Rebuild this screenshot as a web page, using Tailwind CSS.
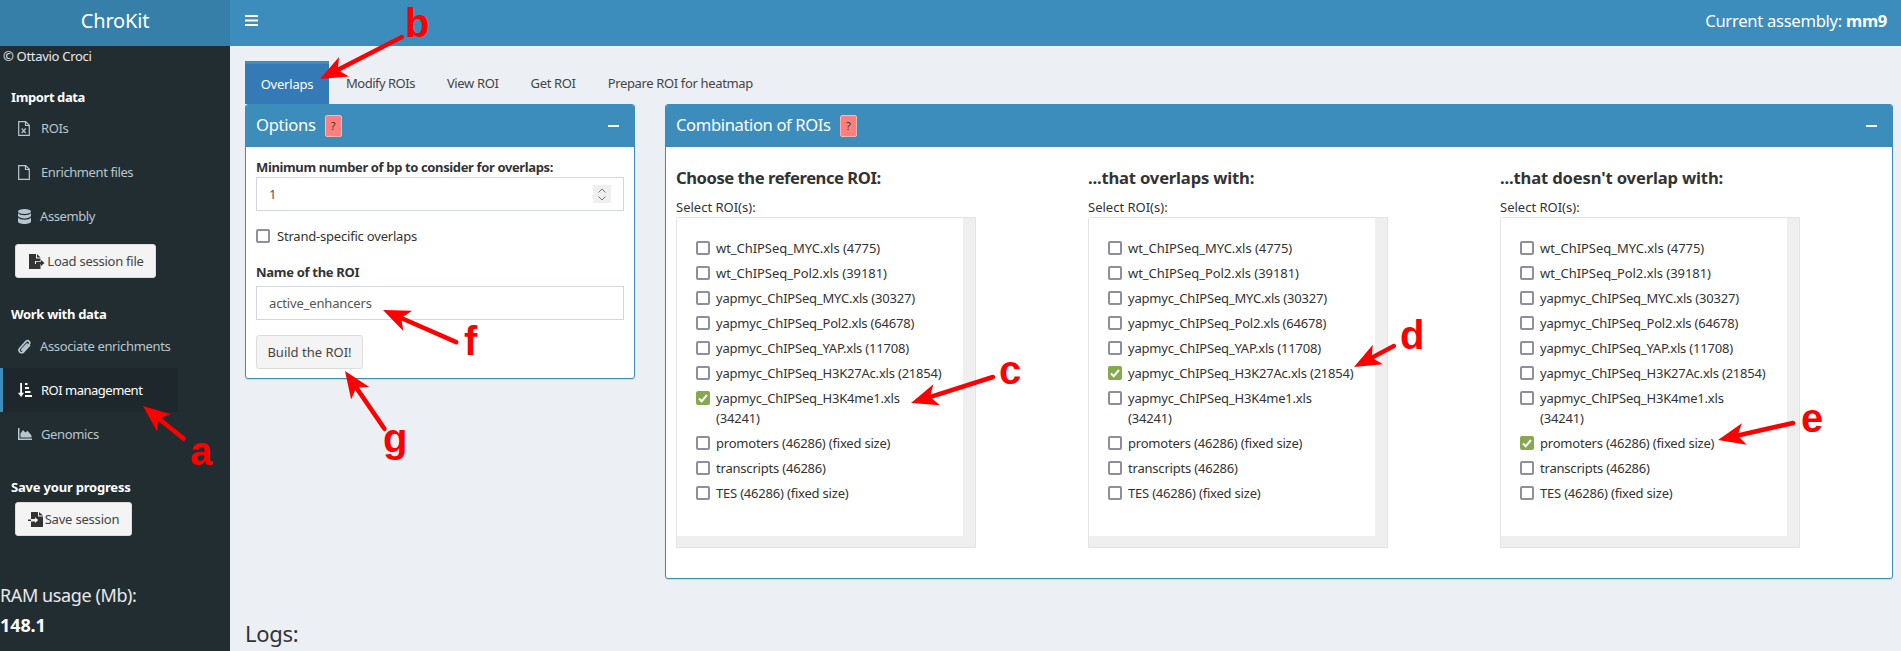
<!DOCTYPE html>
<html lang="en">
<head>
  <meta charset="UTF-8" />
  <title>ChroKit</title>
  <script src="https://cdn.jsdelivr.net/npm/@tailwindcss/browser@4"></script>
</head>
<body class="relative h-[651px] overflow-hidden bg-[#ecf0f5] font-['Noto_Sans',sans-serif] text-[13px] leading-[20px] text-[#333]">
  <!-- Top bar -->
  <header class="flex h-[46px] text-white">
    <div class="flex w-[230px] items-center justify-center bg-[#367fa9] pb-[4px] text-[20px] tracking-[-0.2px]">ChroKit</div>
    <div class="flex flex-1 items-center justify-between bg-[#3c8dbc] pr-[14px] pl-[15px]">
      <svg class="mb-[5px] h-[11px] w-[13px]" viewBox="0 0 13 11" fill="#fff"><rect width="13" height="2" y="0"/><rect width="13" height="2" y="4.5"/><rect width="13" height="2" y="9"/></svg>
      <div class="mb-[5px] text-[16.6px] tracking-[-0.28px]">Current assembly: <b>mm9</b></div>
    </div>
  </header>

  <div class="flex h-[605px]">
    <!-- Sidebar -->
    <aside class="w-[230px] shrink-0 bg-[#222d32] text-[#b8c7ce]">
      <div class="pl-[3px] tracking-[-0.3px] text-white/90">© Ottavio Croci</div>
      <h4 class="mt-[21px] pl-[11px] font-bold tracking-[-0.4px] text-white">Import data</h4>
      <nav class="-mt-px tracking-[-0.4px]">
        <a class="flex h-[44px] items-center pl-[18px]"><span class="w-[23px]">
          <svg class="h-[15px] w-[12px]" viewBox="0 0 12 15" fill="none" stroke="#b8c7ce" stroke-width="1.2"><path d="M.7.7h7l3.6 3.6v10H.7zM7.5.7v3.8h3.8"/><path d="M3.7 7.500l4 4.500M7.700 7.500l-4 4.500"/></svg>
        </span>ROIs</a>
        <a class="flex h-[44px] items-center pl-[18px]"><span class="w-[23px]">
          <svg class="h-[15px] w-[12px]" viewBox="0 0 12 15" fill="none" stroke="#b8c7ce" stroke-width="1.2"><path d="M.7.7h7l3.6 3.6v10H.7zM7.5.7v3.8h3.8"/></svg>
        </span>Enrichment files</a>
        <a class="flex h-[44px] items-center pl-[18px]"><span class="w-[22px]">
          <svg class="h-[15px] w-[13px]" viewBox="0 0 13 15" fill="#b8c7ce"><ellipse cx="6.500" cy="2.500" rx="6.500" ry="2.500"/><path d="M0 4c1 1.600 3.600 2.200 6.500 2.200S12 5.600 13 4v3c-1 1.700-3.600 2.400-6.500 2.400S1 8.700 0 7zM0 8.600c1 1.600 3.600 2.200 6.500 2.200S12 10.200 13 8.600v3.900C13 14 10 15 6.500 15S0 14 0 12.500z"/></svg>
        </span>Assembly</a>
      </nav>
      <button class="mt-[6px] ml-[15px] flex h-[34px] w-[141px] items-center justify-center rounded-[3px] border border-[#ddd] bg-[#f4f4f4] pl-[2px] tracking-[-0.25px] text-[#444]">
        <svg class="mr-[2px] h-[15px] w-[16px]" viewBox="0 0 16 15" fill="#333"><path d="M0 0h7v4.500h4.500V7H6v3h5.500v5H0zM8 0l3.500 3.500H8zM7 7.800h5V6l3.500 3-3.500 3v-1.800H7z"/></svg>Load session file</button>
      <h4 class="mt-[26px] pl-[11px] font-bold tracking-[-0.3px] text-white">Work with data</h4>
      <nav class="tracking-[-0.35px]">
        <a class="flex h-[44px] items-center pl-[18px]"><span class="w-[22px]">
          <svg class="h-[15px] w-[13px]" viewBox="0 0 13 15" fill="none" stroke="#b8c7ce" stroke-width="1.700" stroke-linecap="round"><path d="M11.500 6.500L5.600 12.800c-1.300 1.300-3.100 1.200-4-.1-.9-1.100-.7-2.500.2-3.500L8 2.400c.9-.9 2.200-1 3.100-.1.800.8.800 2.100 0 3L5.500 11.200c-.5.500-1.100.5-1.400.1-.3-.4-.3-.9.100-1.300L9 5"/></svg>
        </span>Associate enrichments</a>
        <a class="flex h-[44px] w-[178px] items-center border-l-[3px] border-[#3c8dbc] bg-[#1e282c] pl-[15px] tracking-[-0.5px] text-white"><span class="w-[23px]">
          <svg class="h-[14px] w-[14px]" viewBox="0 0 14 14" fill="#fff"><path d="M2.200 0h1.800v9.700h2L3.100 14 0 9.700h2.200zM7 0h2.500v2H7zM7 4h4v2H7zM7 8h5.500v2H7zM7 12h7v2H7z"/></svg>
        </span>ROI management</a>
        <a class="flex h-[44px] items-center pl-[18px]"><span class="w-[23px]">
          <svg class="h-[12px] w-[14px]" viewBox="0 0 14 12" fill="#b8c7ce"><path d="M0 0h1.500v10.500H14V12H0z"/><path d="M2.500 9.500V5.500L5 2l2.500 2.500L9.500 2.800 13.500 7.500v2z"/></svg>
        </span>Genomics</a>
      </nav>
      <h4 class="mt-[21px] pl-[11px] font-bold tracking-[-0.2px] text-white">Save your progress</h4>
      <button class="mt-[5px] ml-[15px] flex h-[34px] w-[117px] items-center justify-center rounded-[3px] border border-[#ddd] bg-[#f4f4f4] tracking-[-0.2px] text-[#444]">
        <svg class="mr-[2px] h-[15px] w-[15px]" viewBox="0 0 15 15" fill="#333"><path d="M3 0h7v4.500h5V15H3V9.500h4V11l3.200-3L7 5.200v1.800H3zM11 0l4 3.500h-4zM0 7.500h3v1.500H0z"/></svg>Save session</button>
      <div class="mt-[45px] text-[18px] leading-[28px] tracking-[-0.4px] text-white/90">RAM usage (Mb):</div>
      <div class="mt-[2px] text-[18px] leading-[28px] font-bold tracking-[-0.1px] text-white">148.1</div>
    </aside>

    <!-- Content -->
    <main class="flex-1 px-[15px]">
      <div class="mt-[15px] flex h-[43px] items-center tracking-[-0.35px] text-[#444]">
        <a class="mr-[2px] flex h-[43px] w-[84px] items-center justify-center border-t-[3px] border-[#3c8dbc] bg-[#337ab7] tracking-[-0.2px] text-white">Overlaps</a>
        <a class="mr-[2px] px-[15px] tracking-[-0.5px]">Modify ROIs</a>
        <a class="mr-[2px] px-[15px]">View ROI</a>
        <a class="mr-[2px] px-[15px]">Get ROI</a>
        <a class="mr-[2px] px-[15px]">Prepare ROI for heatmap</a>
      </div>

      <div class="flex items-start gap-[30px]">
        <!-- Options box -->
        <section class="w-[390px] overflow-hidden rounded-[3px] border border-[#3c8dbc] bg-white shadow-[0_1px_1px_rgba(0,0,0,0.1)]">
          <div class="flex h-[42px] items-center justify-between bg-[#3c8dbc] pr-[15px] pl-[10px] text-white">
            <div class="flex items-center text-[16.6px] tracking-[-0.3px]"><span class="mb-[2px]">Options</span><span class="ml-[9px] flex h-[22px] w-[17px] items-center justify-center rounded-[2px] border border-[#ffb3b3] bg-[#ff7f7f] text-[11px] text-[#333]">?</span></div>
            <span class="h-[2px] w-[11px] bg-white"></span>
          </div>
          <div class="px-[10px] pt-[10px] pb-[9px]">
            <label class="block font-bold tracking-[-0.37px]">Minimum number of bp to consider for overlaps:</label>
            <div class="flex h-[34px] items-center border border-[#d2d6de] pr-[12px] pl-[12px] text-[#555]">
              <input class="min-w-0 flex-1 outline-none" value="1" />
              <span class="flex h-[18px] w-[18px] flex-col items-center justify-center gap-[3px] bg-[#efefef]">
                <svg class="h-[5px] w-[8px]" viewBox="0 0 8 5" fill="none" stroke="#777" stroke-width="1"><path d="M.5 4.500l3.500-3.500 3.500 3.500"/></svg>
                <svg class="h-[5px] w-[8px]" viewBox="0 0 8 5" fill="none" stroke="#777" stroke-width="1"><path d="M.5.500l3.500 3.500 3.500-3.500"/></svg>
              </span>
            </div>
            <div class="mt-[15px] flex items-center gap-[7px] tracking-[-0.2px]"><span class="h-[14px] w-[14px] rounded-[2px] border-2 border-[#8f8e9c]"></span>Strand-specific overlaps</div>
            <label class="mt-[16px] mb-[4px] block font-bold tracking-[-0.3px]">Name of the ROI</label>
            <input class="block h-[34px] w-full border border-[#d2d6de] px-[12px] tracking-[-0.15px] text-[#555] outline-none" value="active_enhancers" />
            <button class="mt-[15px] h-[34px] w-[107px] rounded-[3px] border border-[#ddd] bg-[#f4f4f4] text-[#444]">Build the ROI!</button>
          </div>
        </section>

        <!-- Combination box -->
        <section class="h-[475px] w-[1228px] overflow-hidden rounded-[3px] border border-[#3c8dbc] bg-white shadow-[0_1px_1px_rgba(0,0,0,0.1)]">
          <div class="flex h-[42px] items-center justify-between bg-[#3c8dbc] pr-[15px] pl-[10px] text-white">
            <div class="flex items-center text-[16.6px] tracking-[-0.38px]"><span class="mb-[2px]">Combination of ROIs</span><span class="ml-[9px] flex h-[22px] w-[17px] items-center justify-center rounded-[2px] border border-[#ffb3b3] bg-[#ff7f7f] text-[11px] text-[#333]">?</span></div>
            <span class="h-[2px] w-[11px] bg-white"></span>
          </div>
          <div id="columns" class="flex pl-[10px]"></div>
        </section>
      </div>

      <div class="mt-[38px] text-[22px] leading-[32px] tracking-[-0.3px]">Logs:</div>
    </main>
  </div>

  <!-- Annotations drawn over the screenshot -->
  <svg class="pointer-events-none absolute top-0 left-0 h-[651px] w-[1901px]" viewBox="0 0 1901 651" fill="#f00">
    <g stroke="#f00" stroke-width="4.500" stroke-linecap="round">
      <g transform="translate(320 79) rotate(-27.100)"><line x1="18" y1="0" x2="92" y2="0"/></g>
      <g transform="translate(143 406) rotate(38.800)"><line x1="18" y1="0" x2="52" y2="0"/></g>
      <g transform="translate(383 310) rotate(23.700)"><line x1="18" y1="0" x2="80" y2="0"/></g>
      <g transform="translate(345 371) rotate(55.700)"><line x1="18" y1="0" x2="70" y2="0"/></g>
      <g transform="translate(911 403) rotate(-17.600)"><line x1="18" y1="0" x2="86" y2="0"/></g>
      <g transform="translate(1354 367) rotate(-27.700)"><line x1="18" y1="0" x2="45" y2="0"/></g>
      <g transform="translate(1718 440) rotate(-12.800)"><line x1="18" y1="0" x2="77" y2="0"/></g>
    </g>
    <path transform="translate(320 79) rotate(-27.100)" d="M0 0L27 -11L20 0L27 11Z"/>
    <path transform="translate(143 406) rotate(38.800)" d="M0 0L27 -11L20 0L27 11Z"/>
    <path transform="translate(383 310) rotate(23.700)" d="M0 0L27 -11L20 0L27 11Z"/>
    <path transform="translate(345 371) rotate(55.700)" d="M0 0L27 -11L20 0L27 11Z"/>
    <path transform="translate(911 403) rotate(-17.600)" d="M0 0L27 -11L20 0L27 11Z"/>
    <path transform="translate(1354 367) rotate(-27.700)" d="M0 0L27 -11L20 0L27 11Z"/>
    <path transform="translate(1718 440) rotate(-12.800)" d="M0 0L27 -11L20 0L27 11Z"/>
    <g class="font-['Liberation_Sans',sans-serif] text-[40px] font-bold">
      <text x="405" y="37">b</text>
      <text x="190" y="465">a</text>
      <text x="464" y="355">f</text>
      <text x="383" y="452">g</text>
      <text x="999" y="384">c</text>
      <text x="1400" y="349">d</text>
      <text x="1801" y="432">e</text>
    </g>
  </svg>

  <script>
    const rois = ['wt_ChIPSeq_MYC.xls (4775)', 'wt_ChIPSeq_Pol2.xls (39181)', 'yapmyc_ChIPSeq_MYC.xls (30327)', 'yapmyc_ChIPSeq_Pol2.xls (64678)', 'yapmyc_ChIPSeq_YAP.xls (11708)', 'yapmyc_ChIPSeq_H3K27Ac.xls (21854)', 'yapmyc_ChIPSeq_H3K4me1.xls<br>(34241)', 'promoters (46286) (fixed size)', 'transcripts (46286)', 'TES (46286) (fixed size)'];
    const columns = [
      { title: 'Choose the reference ROI:', checked: 6, tracking: 'tracking-[-0.45px]' },
      { title: '...that overlaps with:', checked: 5, tracking: 'tracking-[-0.18px]' },
      { title: "...that doesn't overlap with:", checked: 7, tracking: 'tracking-[-0.15px]' },
    ];
    const tick = '<svg class="h-[14px] w-[14px]" viewBox="0 0 14 14" fill="none" stroke="#fff" stroke-width="2"><path d="M3 7.500l2.700 2.700L11 4"/></svg>';

    document.getElementById('columns').innerHTML = columns.map(col => `
      <div class="w-[412px] shrink-0">
        <h3 class="mt-[19px] mb-[7px] text-[16.6px] leading-[24px] font-bold ${col.tracking}">${col.title}</h3>
        <div>Select ROI(s):</div>
        <div class="h-[331px] w-[300px] rounded-tl-[3px] border border-[#e3e3e3] bg-[#efefef]">
          <div class="flex h-[318px] w-[286px] flex-col gap-[5px] bg-white pt-[20px] pl-[19px] tracking-[-0.2px]">
            ${rois.map((roi, i) => `
              <div class="flex gap-[6px] ${i < 2 ? 'tracking-[-0.05px]' : ''}">
                ${i === col.checked
                  ? `<span class="mt-[3px] h-[14px] w-[14px] shrink-0 rounded-[2px] bg-[#86a94f]">${tick}</span>`
                  : '<span class="mt-[3px] h-[14px] w-[14px] shrink-0 rounded-[2px] border-2 border-[#8f8e9c]"></span>'}
                <span>${roi}</span>
              </div>`).join('')}
          </div>
        </div>
      </div>`).join('');
  </script>
</body>
</html>
